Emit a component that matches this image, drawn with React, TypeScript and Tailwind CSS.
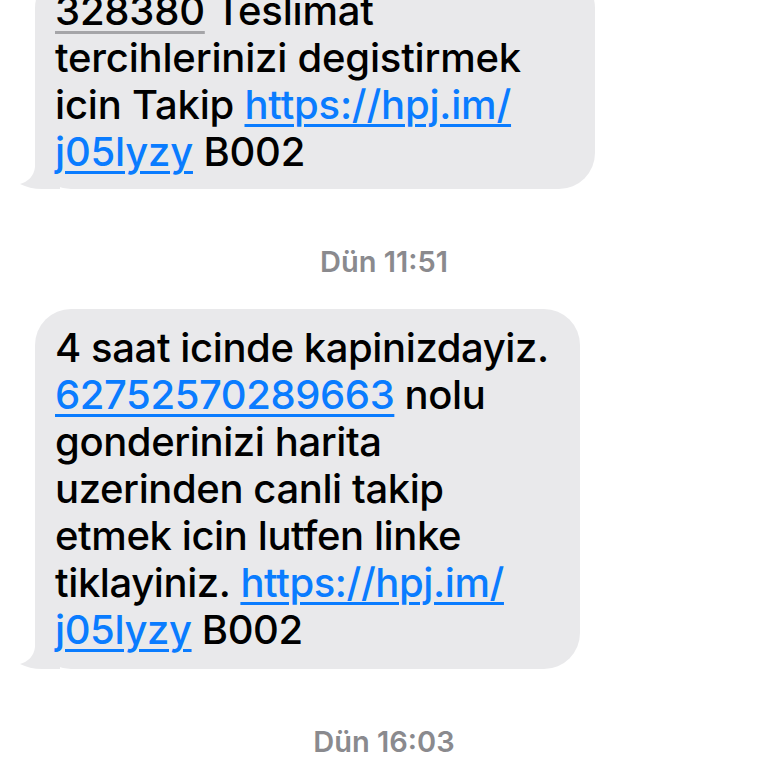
import React from "react";

const Tail = () => (
  <svg
    className="absolute left-[-15px] bottom-0"
    width="40"
    height="40"
    viewBox="0 0 40 40"
  >
    <path
      d="M40 0 L40 40 L22 40 C14 40 6 38 0 35 C8 33 14 27 15 18 L15 0 Z"
      fill="#e9e9eb"
    />
  </svg>
);

const Link = ({ children }: { children: React.ReactNode }) => (
  <span className="text-[#0a7cff] underline decoration-[3px] underline-offset-[5px]">
    {children}
  </span>
);

export default function App() {
  return (
    <div
      className="w-[768px] h-[768px] bg-white overflow-hidden relative"
      style={{ fontFamily: "Inter, 'Noto Sans', sans-serif" }}
    >
      <div className="flex flex-col mt-[-28px]">
        <div className="pl-[35px]">
          <div className="relative w-[560px] bg-[#e9e9eb] rounded-[36px] pl-[20px] pt-[15px] pb-[14px] text-black text-[40px] font-medium leading-[47px] tracking-[-0.005em]">
            <Tail />
            <div className="relative">
              <span className="underline decoration-[#a5a5a8] decoration-[3px] underline-offset-[6px]">328380</span> Teslimat
            </div>
            <div className="relative">tercihlerinizi degistirmek</div>
            <div className="relative">
              icin Takip <Link>https://hpj.im/</Link>
            </div>
            <div className="relative">
              <Link>j05lyzy</Link> B002
            </div>
          </div>
        </div>

        <div className="h-[120px] pt-[56px] text-center leading-[34px]">
          <span className="text-[29px] font-semibold text-[#8a8a8e]">Dün 11:51</span>
        </div>

        <div className="pl-[35px]">
          <div className="relative w-[545px] bg-[#e9e9eb] rounded-[36px] pl-[20px] pt-[15px] pb-[16px] text-black text-[40px] font-medium leading-[47px] tracking-[-0.01em]">
            <Tail />
            <div className="relative">4 saat icinde kapinizdayiz.</div>
            <div className="relative">
              <Link>62752570289663</Link> nolu
            </div>
            <div className="relative">gonderinizi harita</div>
            <div className="relative">uzerinden canli takip</div>
            <div className="relative">etmek icin lutfen linke</div>
            <div className="relative">
              tiklayiniz. <Link>https://hpj.im/</Link>
            </div>
            <div className="relative">
              <Link>j05lyzy</Link> B002
            </div>
          </div>
        </div>

        <div className="h-[146px] pt-[56px] text-center leading-[34px]">
          <span className="text-[29px] font-semibold text-[#8a8a8e]">Dün 16:03</span>
        </div>
      </div>
    </div>
  );
}
